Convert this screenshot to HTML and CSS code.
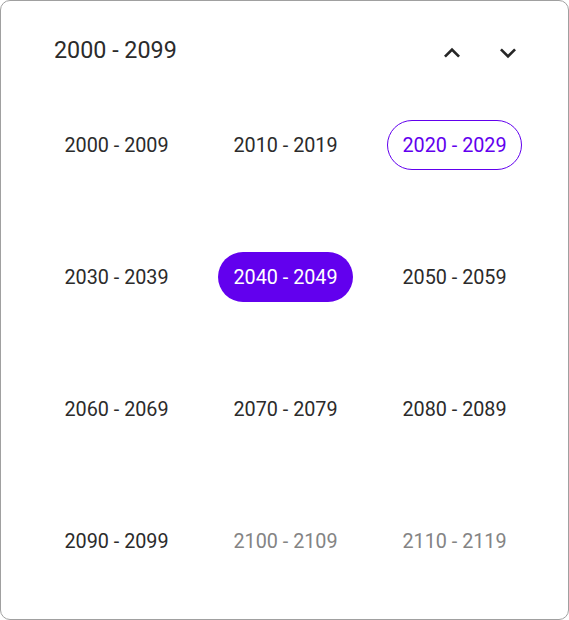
FILE: index.html
```html
<!DOCTYPE html>
<html>
<head>
<meta charset="utf-8">
<link rel="stylesheet" href="styles.css">
</head>
<body>
<div class="card">
  <div class="header">
    <span class="title">2000 - 2099</span>
    <div class="navs">
      <button class="nav" aria-label="previous">
        <svg viewBox="0 0 24 24" width="32" height="32"><path d="M7.41 15.41L12 10.83l4.59 4.58L18 14l-6-6-6 6z" fill="#262626"/></svg>
      </button>
      <button class="nav" aria-label="next">
        <svg viewBox="0 0 24 24" width="32" height="32"><path d="M7.41 8.59L12 13.17l4.59-4.58L18 10l-6 6-6-6z" fill="#262626"/></svg>
      </button>
    </div>
  </div>
  <div class="grid">
    <div class="cell"><span class="item">2000 - 2009</span></div>
    <div class="cell"><span class="item">2010 - 2019</span></div>
    <div class="cell"><span class="item today">2020 - 2029</span></div>
    <div class="cell"><span class="item">2030 - 2039</span></div>
    <div class="cell"><span class="item selected">2040 - 2049</span></div>
    <div class="cell"><span class="item">2050 - 2059</span></div>
    <div class="cell"><span class="item">2060 - 2069</span></div>
    <div class="cell"><span class="item">2070 - 2079</span></div>
    <div class="cell"><span class="item">2080 - 2089</span></div>
    <div class="cell"><span class="item">2090 - 2099</span></div>
    <div class="cell"><span class="item muted">2100 - 2109</span></div>
    <div class="cell"><span class="item muted">2110 - 2119</span></div>
  </div>
</div>
</body>
</html>
```

FILE: styles.css
```css
* { box-sizing: border-box; }
html, body { margin: 0; padding: 0; background: #fff; }
body { font-family: Roboto, "Noto Sans", sans-serif; color: #2b2b2b; }
.card {
  width: 569px;
  height: 620px;
  border: 1px solid #a0a0a0;
  border-radius: 10px;
  display: flex;
  flex-direction: column;
}
.header {
  height: 78px;
  display: flex;
  align-items: center;
  justify-content: space-between;
  padding: 22px 44px 0 53px;
}
.title { font-size: 23.3px; color: #2b2b2b; margin-top: -2px; }
.navs { display: flex; gap: 24px; margin-top: 4px; }
.nav {
  width: 32px; height: 32px; padding: 0; border: 0; background: none;
  display: flex; align-items: center; justify-content: center;
}
.nav svg { display: block; }
.grid {
  flex: 1;
  display: grid;
  grid-template-columns: repeat(3, 169px);
  grid-template-rows: repeat(4, 1fr);
  padding: 0 30px 12px 31px;
}
.cell { display: flex; align-items: center; justify-content: center; }
.item {
  font-size: 19.8px;
  height: 50px;
  width: 135px;
  border-radius: 25px;
  display: flex;
  align-items: center;
  justify-content: center;
  color: #2b2b2b;
}
.today { border: 1.5px solid #6200ee; color: #6200ee; }
.selected { background: #6200ee; color: #fff; }
.muted { color: #848484; }
```
